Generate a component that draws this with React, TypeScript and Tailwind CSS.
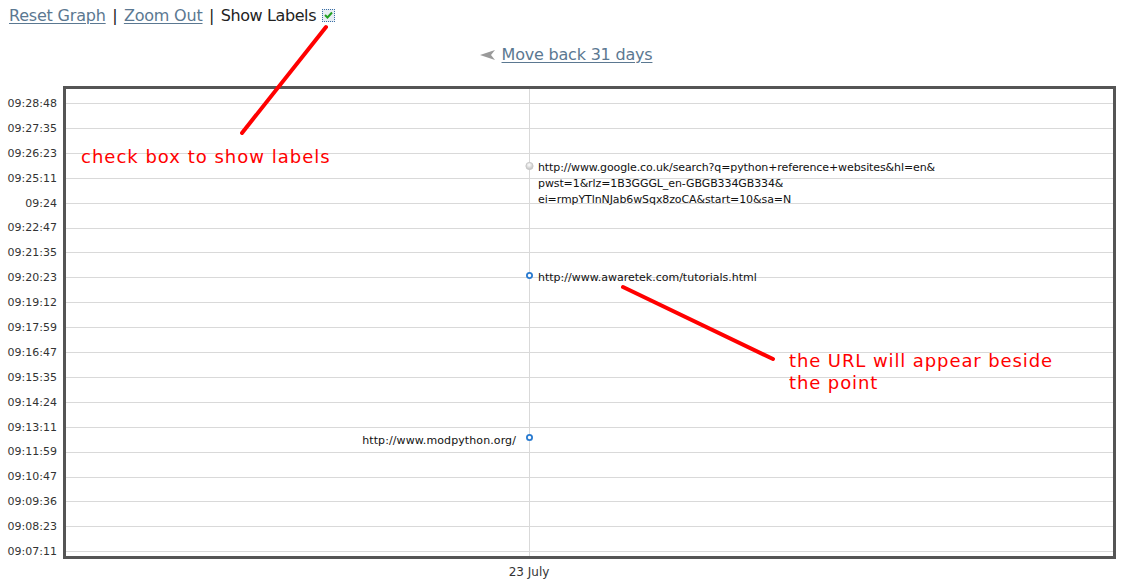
import React from "react";

const yLabels = [
  "09:28:48", "09:27:35", "09:26:23", "09:25:11", "09:24", "09:22:47", "09:21:35",
  "09:20:23", "09:19:12", "09:17:59", "09:16:47", "09:15:35", "09:14:24", "09:13:11",
  "09:11:59", "09:10:47", "09:09:36", "09:08:23", "09:07:11",
];

const font = { fontFamily: '"DejaVu Sans", "Liberation Sans", sans-serif' };

export default function App() {
  const gridYs = yLabels.map((_, i) => 14 + i * 24.9);
  return (
    <div className="relative w-[1122px] h-[584px] bg-white overflow-hidden text-black" style={font}>
      {/* top controls */}
      <div className="h-[31px] pt-[1px] flex items-center pl-[9px] text-[16px] leading-none tracking-[-0.2px]">
        <a className="text-[#5b7891] underline underline-offset-2 cursor-pointer">Reset Graph</a>
        <span className="px-[6.5px] text-[#222]">|</span>
        <a className="text-[#5b7891] underline underline-offset-2 cursor-pointer">Zoom Out</a>
        <span className="px-[6.5px] text-[#222]">|</span>
        <span className="text-[#222] tracking-[-0.4px]">Show Labels</span>
        <span className="ml-[6px] -mt-[2px] w-[13px] h-[13px] border border-dotted border-[#3a6ea5] bg-[#e8eef4] flex items-center justify-center">
          <svg width="9" height="8" viewBox="0 0 9 8">
            <path d="M1 4 L3.5 6.5 L8 1.5" stroke="#22a022" strokeWidth="2" fill="none" />
          </svg>
        </span>
      </div>

      {/* move back */}
      <div className="mt-[9px] h-[30px] flex items-center justify-center pl-[10px] text-[16px] leading-none tracking-[-0.2px]">
        <svg width="16" height="10" viewBox="0 0 16 10" className="mr-[6px]">
          <polygon points="0,5 15,0 11,5 15,10" fill="#9a9a9a" />
        </svg>
        <a className="text-[#5b7891] underline underline-offset-2 cursor-pointer">Move back 31 days</a>
      </div>

      {/* chart */}
      <div className="mt-[16px] flex h-[473px]">
        <div className="w-[63px] shrink-0 flex flex-col pt-[5px] pr-[6px] text-[11px] text-[#333] overflow-visible">
          {yLabels.map((l) => (
            <div key={l} className="h-[24.9px] shrink-0 flex items-center justify-end leading-none">{l}</div>
          ))}
        </div>
        <div className="relative flex-1 mr-[6px] border-[3px] border-[#555]">
          <svg className="absolute inset-0" width="100%" height="100%">
            {gridYs.map((y) => (
              <line key={y} x1="0" x2="2000" y1={Math.round(y) + 0.5} y2={Math.round(y) + 0.5} stroke="#d9d9d9" strokeWidth="1" />
            ))}
            <line x1="463.5" x2="463.5" y1="0" y2="500" stroke="#d9d9d9" strokeWidth="1" />
            <defs>
              <radialGradient id="gp" cx="0.45" cy="0.35" r="0.7">
                <stop offset="0" stopColor="#ffffff" />
                <stop offset="1" stopColor="#b9b9b9" />
              </radialGradient>
            </defs>
            <circle cx="463.5" cy="77" r="3.6" fill="url(#gp)" stroke="#c8c8c8" strokeWidth="1" />
            <circle cx="463.5" cy="186.5" r="2.6" fill="#ffffff" stroke="#2a7bd0" strokeWidth="1.8" />
            <circle cx="463.5" cy="348.5" r="2.6" fill="#ffffff" stroke="#2a7bd0" strokeWidth="1.8" />
          </svg>
          <div className="absolute left-[472px] top-[71px] text-[11px] leading-[16px] text-[#111] tracking-[-0.1px]">
            <div>http://www.google.co.uk/search?q=python+reference+websites&amp;hl=en&amp;</div>
            <div>pwst=1&amp;rlz=1B3GGGL_en-GBGB334GB334&amp;</div>
            <div>ei=rmpYTlnNJab6wSqx8zoCA&amp;start=10&amp;sa=N</div>
          </div>
          <div className="absolute left-[472px] top-[181px] text-[11px] leading-[16px] text-[#111]">
            http://www.awaretek.com/tutorials.html
          </div>
          <div className="absolute right-[597px] top-[344px] text-[11px] leading-[16px] text-[#111] tracking-[0.1px]">
            http://www.modpython.org/
          </div>
        </div>
      </div>
      <div className="flex">
        <div className="w-[529px] shrink-0" />
        <div className="mt-[7px] -translate-x-1/2 text-[12px] leading-none text-[#333]">23 July</div>
      </div>

      {/* annotations */}
      <svg className="absolute inset-0 pointer-events-none" width="1122" height="584">
        <line x1="326" y1="27" x2="242" y2="133" stroke="#ff0000" strokeWidth="4" strokeLinecap="round" />
        <line x1="623" y1="287" x2="773" y2="359" stroke="#ff0000" strokeWidth="4" strokeLinecap="round" />
      </svg>
      <div className="absolute left-[81px] top-[146px] text-[18px] leading-[22px] tracking-[1px] text-[#ff0000]">
        check box to show labels
      </div>
      <div className="absolute left-[789px] top-[350px] text-[18px] leading-[22px] tracking-[0.9px] text-[#ff0000]">
        <div>the URL will appear beside</div>
        <div>the point</div>
      </div>
    </div>
  );
}
